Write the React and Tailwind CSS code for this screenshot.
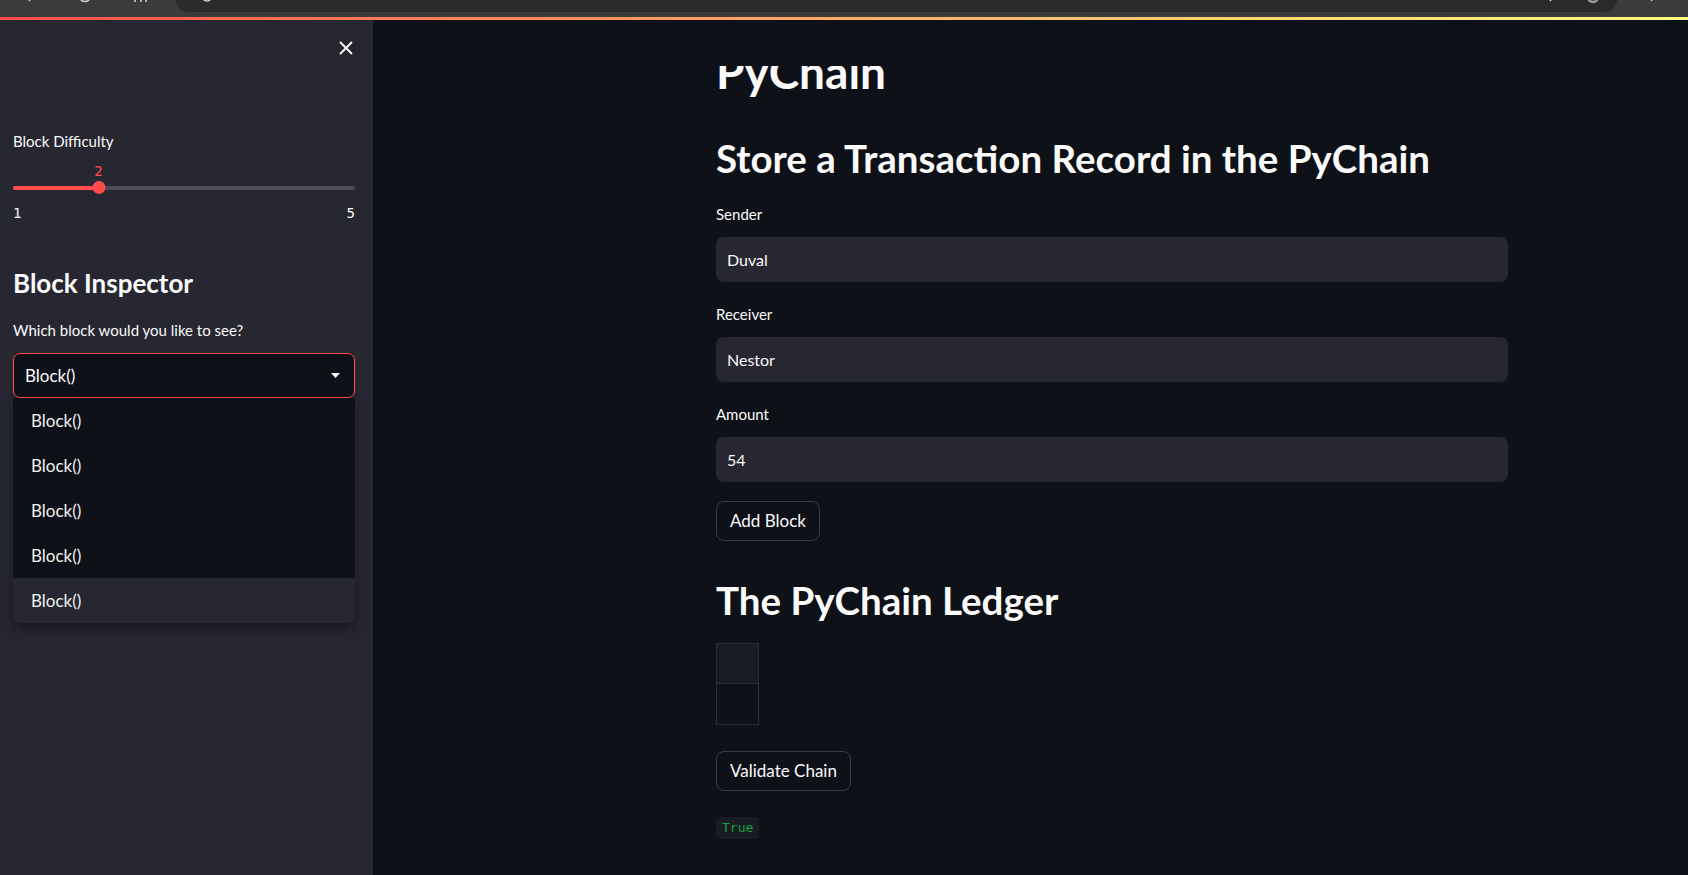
import React from "react";

const sans = "font-[family-name:Lato,sans-serif]";
const mono = "font-[family-name:'DejaVu_Sans_Mono',monospace]";

const blocks = ["Block()", "Block()", "Block()", "Block()", "Block()"];

function BrowserBar() {
  return (
    <div className="relative h-[17px] bg-[#3b3b3b] overflow-hidden">
      <div className="ml-[176px] w-[1441px] h-[12px] bg-[#2a2a2a] rounded-b-[12px]" />
      {/* cut-off toolbar icons */}
      <svg className="absolute inset-0" width="1688" height="17" fill="none" stroke="#cfcfcf" strokeWidth="1.6">
        <path d="M26 -4 L30 1" />
        <circle cx="85" cy="-4" r="5.5" />
        <path d="M135 -4 V2 M141 -4 V2 M146 -4 V2" />
        <circle cx="207" cy="-4" r="5" />
        <path d="M1553 -3 L1550 1" />
        <circle cx="1593" cy="-3" r="5" stroke="#9a9a9a" strokeWidth="2.5" />
        <path d="M1650 -3 L1652 1" />
      </svg>
    </div>
  );
}

function Slider({ min, max, value }) {
  const pct = ((value - min) / (max - min)) * 100;
  return (
    <div className="mt-[10px]">
      <div className="relative h-[20px]">
        <span
          className={`absolute -translate-x-1/2 text-[14px] leading-[20px] text-[#ff4b4b] ${mono}`}
          style={{ left: `${pct}%` }}
        >
          {value}
        </span>
      </div>
      <div className="relative h-[13px] flex items-center">
        <div className="h-[4px] w-full rounded-full bg-[#4b4c56] overflow-hidden flex">
          <div className="h-full bg-[#ff4b4b]" style={{ width: `${pct}%` }} />
        </div>
        <div
          className="absolute w-[13px] h-[13px] -translate-x-1/2 rounded-full bg-[#ff4b4b]"
          style={{ left: `${pct}%` }}
        />
      </div>
      <div className={`mt-[9px] flex justify-between text-[14px] leading-[20px] text-[#fafafa] ${mono}`}>
        <span>{min}</span>
        <span>{max}</span>
      </div>
    </div>
  );
}

function Sidebar() {
  return (
    <aside className="w-[373px] shrink-0 bg-[#262730]">
      <div className="flex justify-end pt-[21px] pr-[20px]">
        <svg width="14" height="14" viewBox="0 0 14 14" stroke="#fafafa" strokeWidth="1.8">
          <path d="M1 1 L13 13 M13 1 L1 13" />
        </svg>
      </div>
      <div className="pl-[13px] pr-[18px]">
        <div className="mt-[76px] text-[15px] leading-[20px]">Block Difficulty</div>
        <Slider min={1} max={5} value={2} />

        <h3 className="mt-[44px] text-[26px] leading-[32px] font-bold">Block Inspector</h3>
        <div className="mt-[21px] text-[15px] leading-[20px]">Which block would you like to see?</div>

        <div className="relative mt-[13px]">
          <div className="h-[45px] flex items-center justify-between pl-[11px] pr-[14px] border border-[#ff4b4b] rounded-[7px] bg-[#0e1117] text-[17px]">
            <span>Block()</span>
            <svg width="9" height="5" viewBox="0 0 9 5" fill="#fafafa">
              <path d="M0 0 H9 L4.5 5 Z" />
            </svg>
          </div>
          {/* open dropdown menu */}
          <ul className="absolute left-0 right-0 top-full bg-[#0e1117] rounded-b-[7px] overflow-hidden shadow-[0_6px_14px_rgba(0,0,0,0.35)]">
            {blocks.map((b, i) => (
              <li
                key={i}
                className={`h-[45px] flex items-center pl-[18px] text-[17px] text-[#f0f0f0] ${
                  i === blocks.length - 1 ? "bg-[#262730]" : ""
                }`}
              >
                {b}
              </li>
            ))}
          </ul>
        </div>
      </div>
    </aside>
  );
}

function Field({ label, value, first }) {
  return (
    <div className={first ? "mt-[24px]" : "mt-[22px]"}>
      <div className="text-[15px] leading-[20px]">{label}</div>
      <div className="mt-[13px] h-[45px] flex items-center pl-[11px] rounded-[8px] bg-[#262730] text-[16px]">
        {value}
      </div>
    </div>
  );
}

function Main() {
  return (
    <main className="flex-1 flex flex-col bg-[#0e1117] overflow-hidden">
      <div className="h-[46px] shrink-0 bg-[#0e1117]" />
      <div className="flex-1 overflow-hidden pl-[343px]">
        <div className="w-[792px] -mt-[20px]">
          <h1 className="text-[46px] leading-[52px] font-bold">PyChain</h1>

          <h2 className="mt-[38px] text-[38.5px] leading-[44px] font-bold">
            Store a Transaction Record in the PyChain
          </h2>

          <Field label="Sender" value="Duval" first />
          <Field label="Receiver" value="Nestor" />
          <Field label="Amount" value="54" />

          <button className="mt-[19px] h-[40px] px-[13px] border border-[#3b3d44] rounded-[8px] bg-[#0e1117] text-[17px]">
            Add Block
          </button>

          <h2 className="mt-[37px] text-[38.5px] leading-[44px] font-bold">The PyChain Ledger</h2>

          <div className="mt-[21px] w-[43px] border border-[#2b2d33]">
            <div className="h-[40px] bg-[#1a1c23] border-b border-[#2b2d33]" />
            <div className="h-[40px] bg-[#0e1117]" />
          </div>

          <button className="block mt-[26px] h-[40px] px-[13px] border border-[#3b3d44] rounded-[8px] bg-[#0e1117] text-[17px]">
            Validate Chain
          </button>

          <div className="mt-[23px]">
            <code className={`inline-block h-[22px] px-[6px] rounded-[4px] bg-[#1a1c23] text-[13px] leading-[22px] text-[#14a33f] ${mono}`}>
              True
            </code>
          </div>
        </div>
      </div>
    </main>
  );
}

export default function App() {
  return (
    <div className={`w-[1688px] h-[875px] flex flex-col overflow-hidden text-[#fafafa] ${sans}`}>
      <BrowserBar />
      <div className="h-[3px] shrink-0 bg-gradient-to-r from-[#ff4b4b] to-[#fffd80]" />
      <div className="flex-1 flex min-h-0">
        <Sidebar />
        <Main />
      </div>
    </div>
  );
}
